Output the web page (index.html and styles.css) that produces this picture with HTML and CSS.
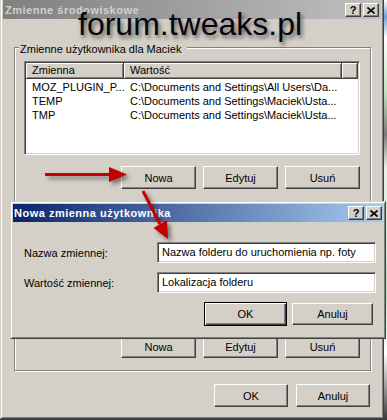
FILE: index.html
```html
<!DOCTYPE html>
<html lang="pl">
<head>
    <meta charset="UTF-8"/>
    <title>Zmienne środowiskowe</title>
    <link rel="stylesheet" href="styles.css">
</head>
<body>

<div class="screen">
    <div class="window">
        <div class="titlebar inactive">
            <span class="title">Zmienne środowiskowe</span>
            <div class="title-btns">
                <span class="tbtn">?</span>
                <span class="tbtn"><svg width="8" height="7" viewBox="0 0 8 7"><path d="M0.5 0.5L7.5 6.5M7.5 0.5L0.5 6.5" stroke="#000" stroke-width="1.6"/></svg></span>
            </div>
        </div>

        <div class="group">
            <div class="group-title">Zmienne użytkownika dla Maciek</div>
            <div class="list">
                <div class="list-head">
                    <div class="hcell col1">Zmienna</div>
                    <div class="hcell col2">Wartość</div>
                    <div class="hcell col3"></div>
                </div>
                <div class="list-rows">
                    <div class="row"><span class="col1">MOZ_PLUGIN_P...</span><span class="col2">C:\Documents and Settings\All Users\Da...</span></div>
                    <div class="row"><span class="col1">TEMP</span><span class="col2">C:\Documents and Settings\Maciek\Usta...</span></div>
                    <div class="row"><span class="col1">TMP</span><span class="col2">C:\Documents and Settings\Maciek\Usta...</span></div>
                </div>
            </div>
            <div class="btns">
                <button class="btn">Nowa</button>
                <button class="btn">Edytuj</button>
                <button class="btn">Usuń</button>
            </div>
            <div class="btns lower">
                <button class="btn">Nowa</button>
                <button class="btn">Edytuj</button>
                <button class="btn">Usuń</button>
            </div>
        </div>

        <div class="btns main">
            <button class="btn wide">OK</button>
            <button class="btn wide">Anuluj</button>
        </div>
    </div>

    <div class="dialog">
        <div class="titlebar active">
            <span class="title">Nowa zmienna użytkownika</span>
            <div class="title-btns">
                <span class="tbtn">?</span>
                <span class="tbtn"><svg width="8" height="7" viewBox="0 0 8 7"><path d="M0.5 0.5L7.5 6.5M7.5 0.5L0.5 6.5" stroke="#000" stroke-width="1.6"/></svg></span>
            </div>
        </div>
        <div class="dialog-body">
            <div class="drow">
                <label class="dlabel" for="varName">Nazwa zmiennej:</label>
                <div class="field" id="varName">Nazwa folderu do uruchomienia np. foty</div>
            </div>
            <div class="drow">
                <label class="dlabel" for="varValue">Wartość zmiennej:</label>
                <div class="field" id="varValue">Lokalizacja folderu</div>
            </div>
            <div class="dbtns">
                <button class="btn default">OK</button>
                <button class="btn dlg">Anuluj</button>
            </div>
        </div>
    </div>

    <div class="watermark">forum.tweaks.pl</div>

    <!-- red arrows pasted over the screenshot -->
    <svg class="arrows" width="387" height="420" viewBox="0 0 387 420">
        <g fill="#c40000" stroke="#c40000">
            <line x1="45" y1="174.5" x2="112" y2="174.5" stroke-width="3"/>
            <polygon points="109,167 127,174.5 109,182" stroke="none"/>
            <line x1="143" y1="191" x2="160" y2="224" stroke-width="3"/>
            <polygon points="167,220 168,239 153.5,228" stroke="none"/>
        </g>
    </svg>
</div>

</body>
</html>
```

FILE: styles.css
```css
body {
  margin: 0;
  font-family: "Liberation Sans", Arial, sans-serif;
  font-size: 11px;
  color: #000;
}
.screen {
  position: relative;
  width: 387px;
  height: 420px;
  overflow: hidden;
  background: linear-gradient(#ffffff 0, #6ea0d8 4%, #ffffff 9%, #bfe3bf 22%, #7a7a7a 32%, #e8f0e8 40%, #bfe6cf 70%, #ffffff 84%, #3a3a3a 100%);
}
.window {
  width: 384px;
  height: 419px;
  box-sizing: border-box;
  background: #d4d0c8;
  border: 1px solid;
  border-color: #d4d0c8 #404040 #404040 #d4d0c8;
  border-top: 0;
  box-shadow: inset 1px 0 #fff, inset -1px -1px #808080;
  padding: 0 2px 2px;
}
.titlebar {
  height: 19px;
  box-sizing: border-box;
  padding: 1px 2px 0 2px;
  display: flex;
  align-items: center;
  justify-content: space-between;
  font-weight: bold;
}
.titlebar .title {
  letter-spacing: 0.5px;
}
.titlebar.inactive {
  background: linear-gradient(to right, #808080, #c0c0c0);
  color: #d4d0c8;
}
.titlebar.active {
  height: 18px;
  padding: 0 1px 0 1px;
  background: linear-gradient(to right, #0a246a, #a6caf0);
  color: #fff;
}
.title-btns {
  display: flex;
  gap: 2px;
}
.tbtn {
  width: 16px;
  height: 14px;
  box-sizing: border-box;
  background: #d4d0c8;
  border: 1px solid;
  border-color: #fff #404040 #404040 #fff;
  box-shadow: inset -1px -1px #808080;
  color: #000;
  font-weight: bold;
  font-size: 11px;
  line-height: 12px;
  letter-spacing: 0;
  display: flex;
  align-items: center;
  justify-content: center;
}
.group {
  margin: 28px 10px 0 11px;
  border: 1px solid #808080;
  box-shadow: inset 1px 1px #fff, 1px 1px #fff;
  padding: 0 10px 12px 9px;
}
.group-title {
  display: table;
  margin: -5px 0 0 -5px;
  padding: 0 6px 0 1px;
  background: #d4d0c8;
  line-height: 13px;
}
.list {
  margin-top: 5px;
  height: 94px;
  box-sizing: border-box;
  background: #fff;
  border: 1px solid;
  border-color: #808080 #fff #fff #808080;
  box-shadow: inset 1px 1px #404040, inset -1px -1px #d4d0c8;
  padding: 1px;
}
.list-head {
  display: flex;
  height: 16px;
}
.hcell {
  box-sizing: border-box;
  height: 16px;
  background: #d4d0c8;
  border-right: 1px solid #404040;
  border-bottom: 1px solid #404040;
  box-shadow: inset 1px 1px #fff, inset -1px -1px #808080;
  padding-left: 6px;
  line-height: 15px;
}
.col1 {
  width: 98px;
  flex: none;
  box-sizing: border-box;
}
.col2 {
  width: 218px;
  flex: none;
  box-sizing: border-box;
}
.col3 {
  flex: 1;
}
.list-rows {
  padding-top: 1px;
}
.row {
  display: flex;
  height: 14px;
  line-height: 14px;
  white-space: nowrap;
}
.row span {
  padding-left: 6px;
}
.btns {
  display: flex;
  justify-content: flex-end;
  gap: 7px;
  margin-top: 11px;
}
.btns.lower {
  margin-top: 146px;
}
.btns.main {
  margin-top: 13px;
  padding-right: 11px;
  gap: 8px;
}
.btn {
  width: 75px;
  height: 23px;
  box-sizing: border-box;
  background: #d4d0c8;
  border: 1px solid;
  border-color: #fff #404040 #404040 #fff;
  box-shadow: inset -1px -1px #808080;
  font: inherit;
  color: #000;
  padding: 0;
}
.btn.wide {
  width: 74px;
}
.dialog {
  position: absolute;
  left: 10px;
  top: 201px;
  width: 376px;
  height: 138px;
  box-sizing: border-box;
  background: #d4d0c8;
  border: 1px solid;
  border-color: #d4d0c8 #404040 #404040 #d4d0c8;
  box-shadow: inset 1px 1px #fff, inset -1px -1px #808080;
  padding: 2px;
}
.dialog-body {
  padding: 20px 7px 0 11px;
}
.drow {
  display: flex;
  align-items: center;
  height: 21px;
  margin-bottom: 9px;
}
.dlabel {
  width: 133px;
  flex: none;
}
.field {
  width: 219px;
  height: 21px;
  box-sizing: border-box;
  background: #fff;
  border: 1px solid;
  border-color: #808080 #fff #fff #808080;
  box-shadow: inset 1px 1px #404040, inset -1px -1px #d4d0c8;
  padding: 0 4px;
  line-height: 19px;
  white-space: nowrap;
  overflow: hidden;
}
.dbtns {
  display: flex;
  justify-content: flex-end;
  align-items: center;
  gap: 5px;
  margin-right: 3px;
}
.btn.default {
  width: 83px;
  height: 24px;
  border: 1px solid #000;
  box-shadow: inset 1px 1px #fff, inset -1px -1px #404040, inset -2px -2px #808080;
}
.btn.dlg {
  width: 81px;
  height: 22px;
}
.watermark {
  position: absolute;
  left: 78px;
  top: 8px;
  font-size: 32px;
  line-height: 32px;
  color: #05050f;
  text-shadow: 2px 3px 4px rgba(0, 0, 0, 0.6);
  white-space: nowrap;
}
.arrows {
  position: absolute;
  left: 0;
  top: 0;
  pointer-events: none;
  filter: drop-shadow(3px 3px 2px rgba(0, 0, 0, 0.45));
}
```
